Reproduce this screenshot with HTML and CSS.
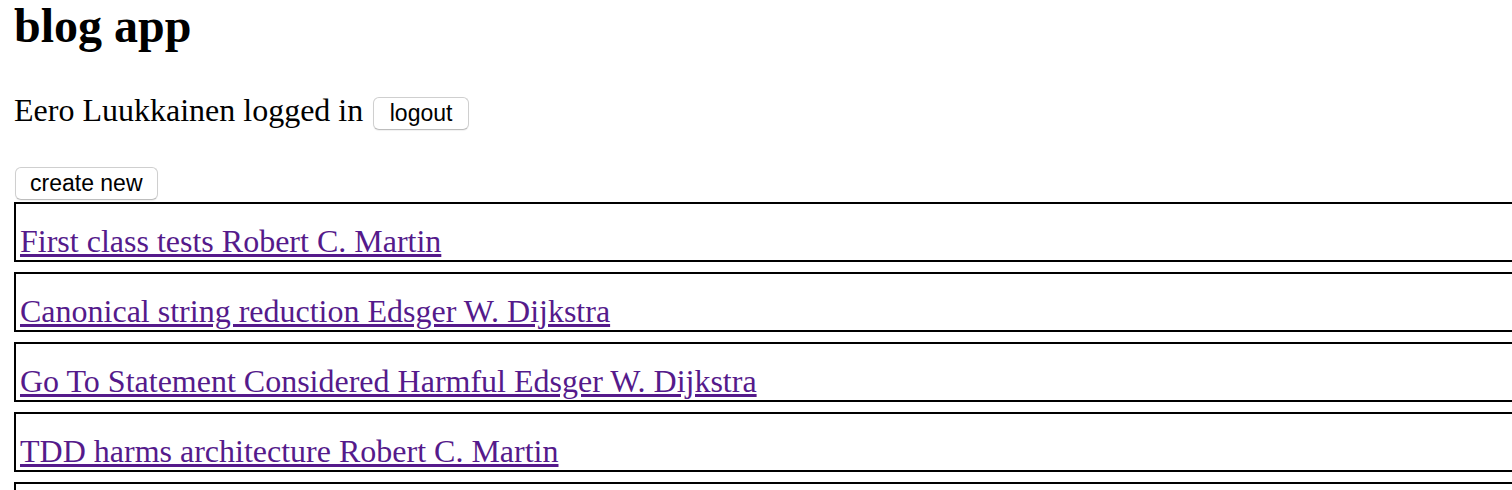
FILE: index.html
```html
<!DOCTYPE html>
<html lang="en">
<head>
<meta charset="utf-8">
<title>blog app</title>
<link rel="stylesheet" href="styles.css">
</head>
<body>
  <h2 class="title">blog app</h2>
  <div class="user-row">
    <span class="user-name">Eero Luukkainen logged in</span>
    <button class="btn btn-logout">logout</button>
  </div>
  <div class="toggle">
    <button class="btn">create new</button>
  </div>
  <div class="blog-list">
    <div class="blog"><a class="blog-link" href="#">First class tests Robert C. Martin</a></div>
    <div class="blog"><a class="blog-link" href="#">Canonical string reduction Edsger W. Dijkstra</a></div>
    <div class="blog"><a class="blog-link" href="#">Go To Statement Considered Harmful Edsger W. Dijkstra</a></div>
    <div class="blog"><a class="blog-link" href="#">TDD harms architecture Robert C. Martin</a></div>
    <div class="blog"><a class="blog-link" href="#">Type wars Robert C. Martin</a></div>
  </div>
</body>
</html>
```
FILE: styles.css
```css
html, body {
  margin: 0;
  padding: 0;
  background: #ffffff;
}

body {
  padding-left: 14px;
  font-family: "Liberation Serif", "Times New Roman", serif;
  font-size: 32px;
  color: #000000;
  overflow: hidden;
}

.title {
  margin: 0;
  font-size: 48px;
  font-weight: bold;
  line-height: 52px;
}

.user-row {
  margin-top: 40px;
  display: flex;
  align-items: baseline;
  gap: 10px;
  line-height: 36px;
}

.btn {
  font-family: "Liberation Sans", Arial, sans-serif;
  font-size: 23px;
  color: #000000;
  height: 33px;
  padding: 0 14px;
  margin: 0;
  background: #ffffff;
  border: 1px solid #cfcfcf;
  border-bottom-color: #bdbdbd;
  border-radius: 6px;
  box-shadow: 0 1px 1px rgba(0, 0, 0, 0.06);
  line-height: 31px;
}

.btn-logout {
  padding: 0 15.5px;
}

.toggle {
  margin-top: 37px;
  display: flex;
}

.toggle .btn {
  margin-left: 1px;
}

.blog-list {
  margin-top: 2px;
  margin-right: -60px;
}

.blog {
  border: 2px solid #000000;
  padding: 19px 0 0 4px;
  margin-bottom: 10px;
  line-height: 37px;
}

.blog-link {
  color: #551a8b;
  text-decoration: underline;
}
```
